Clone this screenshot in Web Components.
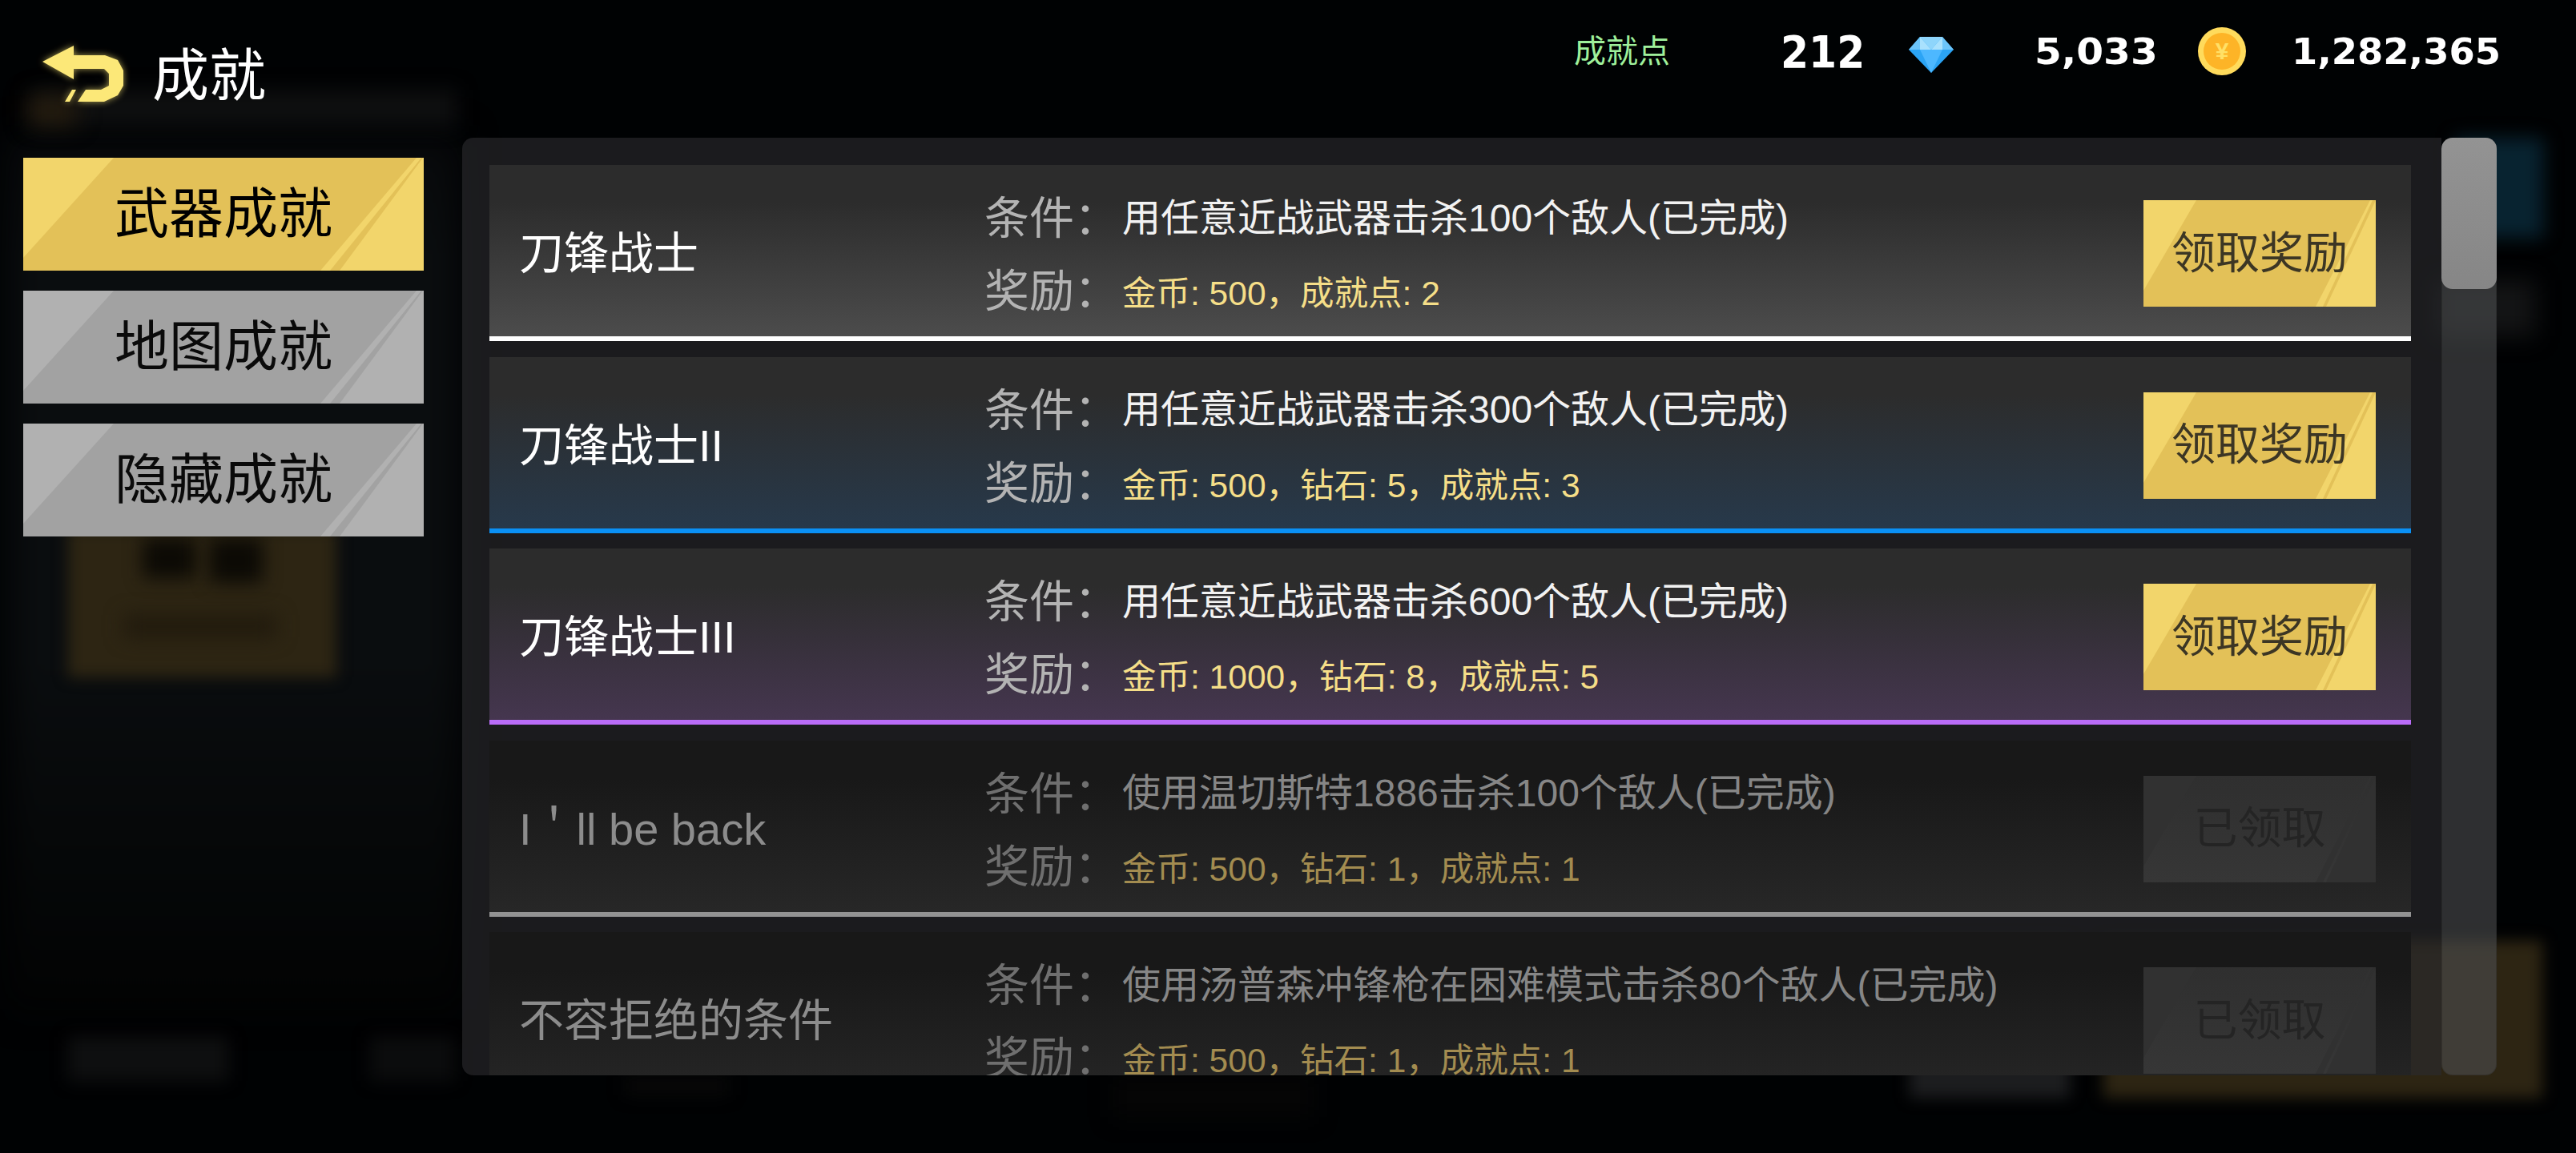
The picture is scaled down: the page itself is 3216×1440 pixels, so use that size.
<!DOCTYPE html>
<html lang="zh-CN"><head><meta charset="utf-8"><title>成就</title>
<style>
html,body{margin:0;padding:0;background:#000;}
body{font-family:"Liberation Sans","Noto Sans CJK SC",sans-serif;}
</style></head><body>
<game-screen>
  <blur-backdrop></blur-backdrop>
  <top-bar slot="top" heading="成就" points="212" gems="5,033" coins="1,282,365"></top-bar>
  <side-nav slot="nav">
    <nav-tab active>武器成就</nav-tab>
    <nav-tab>地图成就</nav-tab>
    <nav-tab>隐藏成就</nav-tab>
  </side-nav>
  <ach-panel slot="panel">
    <ach-row tier="white" heading="刀锋战士" cond="用任意近战武器击杀100个敌人(已完成)" reward="金币: 500&#xFF0C;成就点: 2"><claim-btn>领取奖励</claim-btn></ach-row>
    <ach-row tier="blue" heading="刀锋战士II" cond="用任意近战武器击杀300个敌人(已完成)" reward="金币: 500&#xFF0C;钻石: 5&#xFF0C;成就点: 3"><claim-btn>领取奖励</claim-btn></ach-row>
    <ach-row tier="purple" heading="刀锋战士III" cond="用任意近战武器击杀600个敌人(已完成)" reward="金币: 1000&#xFF0C;钻石: 8&#xFF0C;成就点: 5"><claim-btn>领取奖励</claim-btn></ach-row>
    <ach-row tier="done" heading="I&#xFF07;ll be back" cond="使用温切斯特1886击杀100个敌人(已完成)" reward="金币: 500&#xFF0C;钻石: 1&#xFF0C;成就点: 1"><claim-btn done>已领取</claim-btn></ach-row>
    <ach-row tier="done" heading="不容拒绝的条件" cond="使用汤普森冲锋枪在困难模式击杀80个敌人(已完成)" reward="金币: 500&#xFF0C;钻石: 1&#xFF0C;成就点: 1"><claim-btn done>已领取</claim-btn></ach-row>
  </ach-panel>
</game-screen>
<script>
function def(name, css, html){
  customElements.define(name, class extends HTMLElement{
    connectedCallback(){
      if(this.shadowRoot) return;
      const r=this.attachShadow({mode:'open'});
      r.innerHTML='<style>'+css+'</style>'+(typeof html==='function'?html(this):html);
    }
  });
}
def('game-screen',`
:host{display:grid;position:relative;overflow:hidden;width:3216px;height:1440px;background:#000203;
 grid-template-columns:577px 2540px;grid-template-rows:172px 1171px;}
.top{grid-column:1/3;display:block;}
`,`<slot></slot><div class="top"><slot name="top"></slot></div><slot name="nav"></slot><slot name="panel"></slot>`);

def('blur-backdrop',`
:host{position:absolute;inset:0;display:block;overflow:hidden;}
i{position:absolute;display:block;filter:blur(9px);}
`,`
<i style="left:10px;top:170px;width:565px;height:1090px;background:linear-gradient(#07090b,#0a0d0f 14%,#0a0d0f 60%,#020303);filter:blur(22px)"></i>
<i style="left:40px;top:113px;width:530px;height:44px;background:#0e0f10;filter:blur(12px)"></i>
<i style="left:35px;top:120px;width:60px;height:36px;background:#251c0e;filter:blur(14px)"></i>
<i style="left:85px;top:660px;width:335px;height:186px;background:#2d2513"></i>
<i style="left:178px;top:672px;width:66px;height:50px;background:#0c0a05;filter:blur(11px)"></i>
<i style="left:262px;top:672px;width:66px;height:56px;background:#0c0a05;filter:blur(11px)"></i>
<i style="left:155px;top:768px;width:190px;height:28px;background:#211a0d;filter:blur(12px)"></i>
<i style="left:85px;top:1295px;width:200px;height:55px;background:#0e0f10;filter:blur(10px)"></i>
<i style="left:462px;top:1295px;width:105px;height:55px;background:#0b0c0d;filter:blur(10px)"></i>
<i style="left:780px;top:1345px;width:130px;height:22px;background:#080808;filter:blur(10px)"></i>
<i style="left:1390px;top:1345px;width:250px;height:50px;background:#050505;filter:blur(14px)"></i>
<i style="left:2384px;top:1175px;width:200px;height:196px;background:#1c1d1f"></i>
<i style="left:2626px;top:1175px;width:548px;height:196px;background:#2d2513"></i>
<i style="left:3065px;top:172px;width:110px;height:125px;background:#082330;filter:blur(11px)"></i>
<i style="left:3040px;top:350px;width:125px;height:70px;background:#131415;filter:blur(14px)"></i>
`);

def('top-bar',`
:host{display:flex;align-items:flex-start;height:172px;color:#fff;position:relative;}
svg.back{width:120px;height:90px;margin:45px 0 0 45px;flex:none;overflow:visible;filter:drop-shadow(0 0 4px rgba(252,232,120,.65));}
h1{margin:49px 0 0 25px;font-size:71px;line-height:92px;font-weight:400;width:1775px;flex:none;white-space:nowrap;}
.stats{display:flex;align-items:center;height:60px;margin-top:34px;}
.lbl{font-size:40px;line-height:60px;color:#9ff09b;width:258px;flex:none;}
.num{font-family:"DejaVu Sans",sans-serif;font-weight:700;color:#fff;white-space:nowrap;display:block;transform-origin:left center;flex:none;}
.pts{font-size:56px;width:105px;transform:scaleX(.9);}
.gem{width:56px;height:45px;margin:8px 0 0 55px;flex:none;}
.g{font-size:45px;width:153px;margin-left:101px;transform:scaleX(1.08);}
.coin{width:60px;height:60px;margin-left:51px;flex:none;display:grid;place-items:center;border-radius:50%;background:#ffdb5c;position:relative;}
.coin b{display:grid;place-items:center;width:46px;height:46px;border-radius:50%;background:#fdb427;color:#ffe066;font:700 30px/46px "Liberation Sans",sans-serif;}
.c{font-size:45px;margin-left:57px;transform:scaleX(1.03);}
`,(h)=>`
<svg class="back" viewBox="45 45 120 90" aria-hidden="true">
<path fill="#fce878" d="M53 77L92 57V69H131L147 75L154 88V107L147 119L130 127H97L107 112H126L136 107V92L130 86H92V99Z"/>
<path fill="#fce878" d="M90 112H95L87 127H81Z"/>
</svg>
<h1>${h.getAttribute('heading')}</h1>
<div class="stats">
<span class="lbl">成就点</span>
<span class="num pts">${h.getAttribute('points')}</span>
<svg class="gem" viewBox="0 0 56 45" aria-hidden="true">
<polygon points="14,0 42,0 56,16 28,45 0,16" fill="#2ba4f5"/>
<polygon points="14,16 42,16 28,45" fill="#4db8ff"/>
<polygon points="0,16 14,0 14,16" fill="#6cc5fa"/><polygon points="56,16 42,0 42,16" fill="#6cc5fa"/>
<polygon points="14,0 42,0 28,16" fill="#8ed5fb"/>
<polygon points="14,0 28,16 14,16" fill="#a9e1fd"/><polygon points="42,0 28,16 42,16" fill="#a9e1fd"/>
</svg>
<span class="num g">${h.getAttribute('gems')}</span>
<span class="coin"><b>¥</b></span>
<span class="num c">${h.getAttribute('coins')}</span>
</div>`);

def('side-nav',`
:host{display:flex;flex-direction:column;gap:25px;padding:25px 0 0 29px;box-sizing:border-box;width:529px;position:relative;}
`,`<slot></slot>`);

def('nav-tab',`
:host{display:grid;place-items:center;position:relative;width:500px;height:141px;box-sizing:border-box;padding-bottom:12px;font-size:68px;color:#0a0a0a;--base:#a2a2a2;--hi:#b1b1b1;background:var(--base);}
:host([active]){--base:#e3c158;--hi:#f2d56b;color:#000;}
svg{position:absolute;inset:0;width:100%;height:100%;}
span{position:relative;white-space:nowrap;}
`,`<svg viewBox="0 0 500 141" preserveAspectRatio="none" aria-hidden="true">
<polygon points="0,0 113,0 0,125" fill="var(--hi)"/>
<polygon points="371,141 383,141 497,0 491,0" fill="var(--hi)"/>
<polygon points="395,141 500,141 500,0 499,0" fill="var(--hi)"/>
</svg><span><slot></slot></span>`);

def('ach-panel',`
:host{display:flex;width:2540px;height:1171px;position:relative;}
.list{width:2471px;height:1171px;box-sizing:border-box;padding:34px 38px 0 34px;overflow:hidden;display:flex;flex-direction:column;gap:19.5px;
 background:rgba(42,43,46,.63);border-radius:14px 0 0 14px;}
.track{width:69px;height:1171px;background:rgba(77,78,80,.6);border-radius:14px;box-shadow:inset 0 0 0 1px rgba(0,0,0,.15);}
.thumb{height:189px;border-radius:14px;background:linear-gradient(#939393,#868686);}
`,`<div class="list"><slot></slot></div><div class="track"><div class="thumb"></div></div>`);

def('ach-row',`
:host{display:flex;flex:none;height:220px;box-sizing:border-box;border-bottom:6px solid var(--line);background:linear-gradient(var(--a),var(--a) 22%,var(--b));color:#fff;
 --line:#fff;--a:#2c2c2c;--b:#4c4c4c;--lab:#b3b3b3;--c:#f2f2f2;--r:#f5de88;--t:#fff;}
:host([tier=blue]){--line:#0a90f5;--a:#2c2c2c;--b:#27394b;}
:host([tier=purple]){--line:#b96cf8;--a:#2c2c2c;--b:#45364f;}
:host([tier=done]){--line:#939393;--a:#181818;--b:#272727;--lab:#6f6f6f;--c:#868686;--r:#a38c50;--t:#8c8c8c;}
.t{width:618px;flex:none;padding-left:37px;box-sizing:border-box;font-size:56px;line-height:222px;color:var(--t);white-space:nowrap;}
.i{width:1447px;flex:none;padding-top:16px;box-sizing:border-box;}
.l{display:flex;height:91px;align-items:center;white-space:nowrap;}
.l span:first-child{width:172px;flex:none;font-size:56px;color:var(--lab);}
.cd{font-size:48px;color:var(--c);}
.rw{font-size:42.5px;color:var(--r);padding-top:8px;}
.a{flex:none;width:290px;padding-top:44px;}
`,(h)=>`<div class="t">${h.getAttribute('heading')}</div>
<div class="i"><div class="l"><span>条件&#xFF1A;</span><span class="cd">${h.getAttribute('cond')}</span></div>
<div class="l"><span>奖励&#xFF1A;</span><span class="rw">${h.getAttribute('reward')}</span></div></div>
<div class="a"><slot></slot></div>`);

def('claim-btn',`
:host{display:grid;place-items:center;position:relative;width:290px;height:133px;box-sizing:border-box;padding-bottom:12px;font-size:55px;color:#3c3624;--hi:#f2d56b;background:#e3c158;}
:host([done]){color:#242424;--hi:#313131;background:linear-gradient(#2f2f2f,#363636);}
svg{position:absolute;inset:0;width:100%;height:100%;}
span{position:relative;white-space:nowrap;}
`,`<svg viewBox="0 0 290 133" preserveAspectRatio="none" aria-hidden="true">
<polygon points="0,0 66,0 0,113" fill="var(--hi)"/>
<polygon points="215,133 224,133 286,0 283,0" fill="var(--hi)"/>
<polygon points="228,133 290,133 290,0" fill="var(--hi)"/>
</svg><span><slot></slot></span>`);
</script>
</body></html>
